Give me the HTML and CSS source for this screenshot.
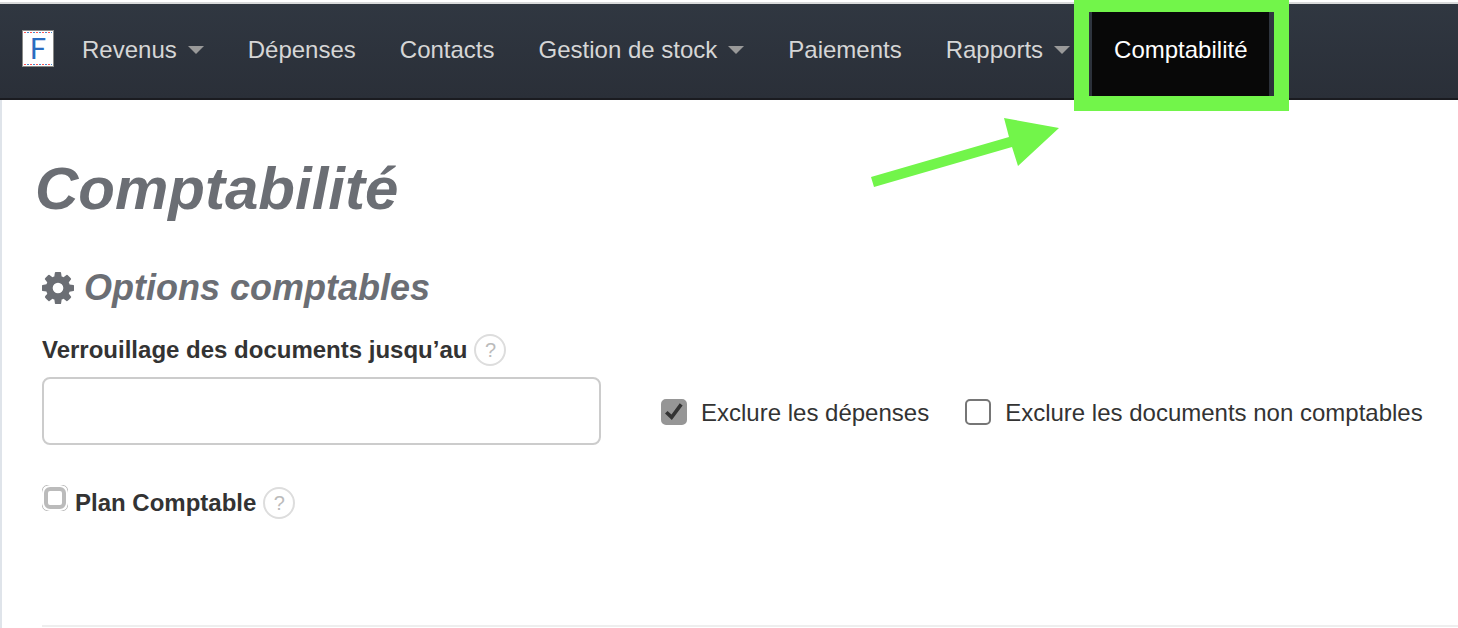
FILE: index.html
```
<!DOCTYPE html>
<html lang="fr">
<head>
	<meta charset="UTF-8">
	<title>Comptabilité</title>
	<link rel="stylesheet" href="styles.css">
</head>
<body>
	<nav class="navbar">
		<a class="brand" href="#">F</a>
		<ul class="menu">
			<li><a href="#">Revenus <span class="caret"></span></a></li>
			<li><a href="#">Dépenses</a></li>
			<li><a href="#">Contacts</a></li>
			<li><a href="#">Gestion de stock <span class="caret"></span></a></li>
			<li><a href="#">Paiements</a></li>
			<li><a href="#">Rapports <span class="caret"></span></a></li>
			<li class="active">
				<a href="#">Comptabilité</a>
				<span class="highlight"></span>
				<svg class="arrow" width="190" height="74" viewBox="0 0 190 74">
					<path d="M1 60 L139 20 L134 1 L189 11 L148 49 L142 30 L4 70 Z" fill="#72f54a"/>
				</svg>
			</li>
		</ul>
	</nav>
	<main class="content">
		<h1>Comptabilité</h1>
		<section class="options">
			<h2>
				<svg class="gear" width="32" height="32" viewBox="0 0 1536 1536">
					<path fill="currentColor" d="M1024 768q0-106-75-181t-181-75-181 75-75 181 75 181 181 75 181-75 75-181zm512-109v222q0 12-8 23t-20 13l-185 28q-19 54-39 91 35 50 107 138 10 12 10 25t-9 23q-27 37-99 108t-94 71q-12 0-26-9l-138-108q-44 23-91 38-16 136-29 186-7 28-36 28H657q-14 0-24.500-8.500T621 1506l-28-184q-49-16-90-37l-141 107q-10 9-25 9-14 0-25-11-126-114-165-168-7-10-7-23 0-12 8-23 15-21 51-66.500t54-70.500q-27-50-41-99L29 913q-13-2-21-12.500T0 877V655q0-12 8-23t19-13l186-28q14-46 39-92-40-57-107-138-10-12-10-24 0-10 9-23 26-36 98.500-107.500T337 135q13 0 26 10l138 107q44-23 91-38 16-136 29-186 7-28 36-28h222q14 0 24.500 8.500T915 30l28 184q49 16 90 37l142-107q9-9 24-9 13 0 25 10 129 119 165 170 7 8 7 22 0 12-8 23-15 21-51 66.500t-54 70.500q26 50 41 98l183 28q13 2 21 12.500t8 23.500z"/>
				</svg>
				Options comptables
			</h2>
			<div class="field-label">
				<label for="lock-date">Verrouillage des documents jusqu’au</label>
				<button type="button" class="help">?</button>
			</div>
			<div class="lock-row">
				<input type="text" id="lock-date">
				<div class="checks">
					<label><input type="checkbox" checked> Exclure les dépenses</label>
					<label><input type="checkbox"> Exclure les documents non comptables</label>
				</div>
			</div>
			<div class="field-label plan">
				<input type="checkbox" id="plan">
				<label for="plan">Plan Comptable</label>
				<button type="button" class="help">?</button>
			</div>
			<hr>
		</section>
	</main>
</body>
</html>
```

FILE: styles.css
```
*, *::before {
	box-sizing: border-box;
}
body {
	display: flex;
	flex-direction: column;
	min-height: 100vh;
	margin: 0;
	padding-top: 2px;
	background: #fff;
	color: #333;
	font-family: "Liberation Sans", Arial, sans-serif;
	font-size: 24px;
	line-height: 32px;
}

/* navigation */
.navbar {
	display: flex;
	align-items: flex-start;
	height: 98px;
	padding-left: 22px;
	background: linear-gradient(#303741, #2a2f38);
	border-top: 2px solid #d9dadb;
	border-bottom: 2px solid #1a1b20;
}
.brand {
	width: 32px;
	height: 37px;
	margin: 26px 6px 0 0;
	border: 1px solid #8a8a88;
	background:
		repeating-linear-gradient(90deg, #f55 0 2px, #fff 2px 3px, #48c 3px 5px, #fff 5px 6px) 1px 1px / 28px 1px no-repeat,
		repeating-linear-gradient(90deg, #f55 0 2px, #fff 2px 3px, #48c 3px 5px, #fff 5px 6px) 1px 33px / 28px 1px no-repeat,
		#fff;
	color: #2b6cc0;
	font-family: Lato, sans-serif;
	font-size: 29px;
	line-height: 33px;
	text-align: center;
	text-decoration: none;
}
.menu {
	display: flex;
	align-self: stretch;
	margin: 0;
	padding: 0;
	list-style: none;
}
.menu li {
	position: relative;
}
.menu a {
	display: flex;
	align-items: center;
	gap: 11px;
	height: 100%;
	padding: 0 22px 2px;
	color: #d6d6d6;
	text-decoration: none;
	white-space: nowrap;
}
.menu .active a {
	background: #080808;
	color: #fff;
}
.caret {
	border: 8px solid transparent;
	border-top-color: #999;
	border-bottom: 0;
}
.highlight {
	position: absolute;
	top: -4px;
	right: -20px;
	bottom: -13px;
	left: -18px;
	border: 15px solid #72f54a;
	border-top-width: 12px;
	pointer-events: none;
}
.arrow {
	position: absolute;
	top: 113px;
	left: -222px;
}

/* page */
.content {
	flex: 1;
	padding: 59px 0 0 33px;
	border-left: 2px solid #dfe4ea;
}
h1, h2 {
	margin: 0;
	color: #6b6e74;
	font-style: italic;
}
h1 {
	font-size: 60px;
	line-height: 60px;
}
h2 {
	display: flex;
	align-items: center;
	gap: 10px;
	margin-bottom: 28px;
	font-size: 36px;
	line-height: 36px;
}
.options {
	padding: 51px 0 0 7px;
}
.field-label {
	display: flex;
	align-items: center;
	gap: 7px;
	font-weight: bold;
}
.help {
	width: 32px;
	height: 32px;
	padding: 0;
	border: 2px solid #ddd;
	border-radius: 50%;
	background: #fff;
	color: #bbb;
	font: 20px "Liberation Sans", Arial, sans-serif;
}
.lock-row {
	display: flex;
	flex-wrap: wrap;
	align-items: center;
	gap: 20px 60px;
	margin: 11px 0 42px;
}
input[type=text] {
	width: 559px;
	max-width: 100%;
	height: 68px;
	padding: 8px 12px;
	border: 2px solid #ccc;
	border-radius: 8px;
	font: inherit;
}
.checks {
	display: flex;
	flex-wrap: wrap;
	gap: 12px 36px;
	padding-top: 4px;
}
.checks label {
	display: flex;
	align-items: flex-start;
	gap: 14px;
}
input[type=checkbox] {
	appearance: none;
	display: grid;
	place-items: center;
	flex: none;
	width: 26px;
	height: 26px;
	margin: 2px 0 0;
	border: 2px solid #767676;
	border-radius: 5px;
	background: #fff;
}
input[type=checkbox]:checked {
	border-color: #969696;
	background: #969696;
}
input[type=checkbox]:checked::before {
	content: "";
	width: 18px;
	height: 18px;
	background: #333;
	clip-path: polygon(0 58%, 14% 44%, 36% 64%, 82% 2%, 98% 14%, 38% 94%);
}
/* thick inner box, only the corners of the outer one stay visible */
.plan input[type=checkbox] {
	align-self: flex-start;
	margin: -2px 0 0;
	border: 1px solid #bbb;
}
.plan input[type=checkbox]::before {
	content: "";
	width: 22px;
	height: 22px;
	border: 4px solid #bbb;
	border-radius: 6px;
	box-shadow: 0 2px #fff, 0 -2px #fff, 2px 0 #fff, -2px 0 #fff;
}
hr {
	height: 2px;
	margin: 106px 0 0;
	border: 0;
	background: #eee;
}
```
